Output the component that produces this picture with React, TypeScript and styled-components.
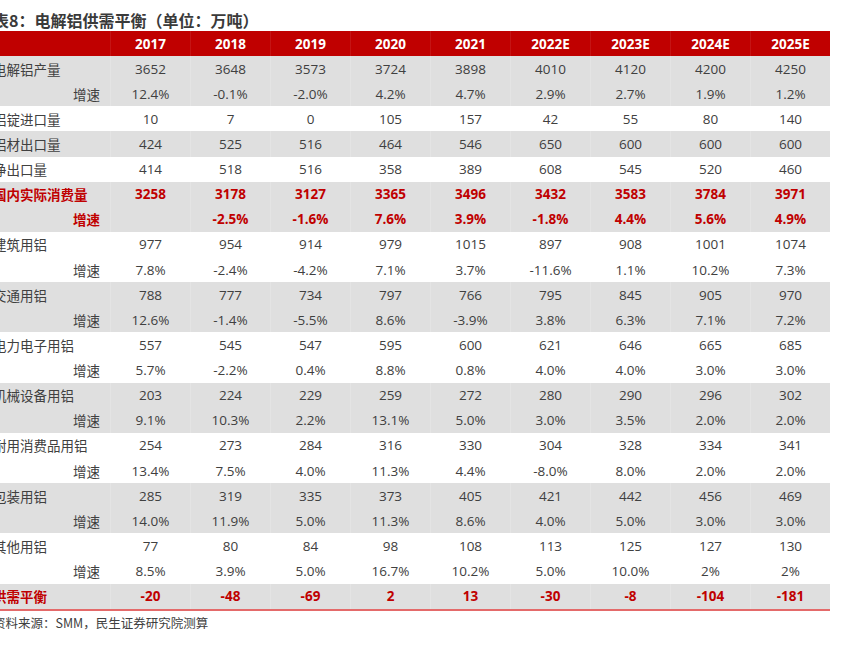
import React from 'react';
import styled, { createGlobalStyle } from 'styled-components';

const GlobalStyle = createGlobalStyle`
  html, body {
    margin: 0;
    padding: 0;
    background: #ffffff;
  }
  body {
    font-family: "Open Sans", "Noto Sans CJK SC", sans-serif;
  }
`;

const years = ['2017', '2018', '2019', '2020', '2021', '2022E', '2023E', '2024E', '2025E'];

interface RowData {
  label: string;
  values: string[];
  sub?: boolean;
  shade?: boolean;
  hot?: boolean;
}

const rows: RowData[] = [
  { label: '电解铝产量', shade: true, values: ['3652', '3648', '3573', '3724', '3898', '4010', '4120', '4200', '4250'] },
  { label: '增速', sub: true, shade: true, values: ['12.4%', '-0.1%', '-2.0%', '4.2%', '4.7%', '2.9%', '2.7%', '1.9%', '1.2%'] },
  { label: '铝锭进口量', values: ['10', '7', '0', '105', '157', '42', '55', '80', '140'] },
  { label: '铝材出口量', shade: true, values: ['424', '525', '516', '464', '546', '650', '600', '600', '600'] },
  { label: '净出口量', values: ['414', '518', '516', '358', '389', '608', '545', '520', '460'] },
  { label: '国内实际消费量', shade: true, hot: true, values: ['3258', '3178', '3127', '3365', '3496', '3432', '3583', '3784', '3971'] },
  { label: '增速', sub: true, shade: true, hot: true, values: ['', '-2.5%', '-1.6%', '7.6%', '3.9%', '-1.8%', '4.4%', '5.6%', '4.9%'] },
  { label: '建筑用铝', values: ['977', '954', '914', '979', '1015', '897', '908', '1001', '1074'] },
  { label: '增速', sub: true, values: ['7.8%', '-2.4%', '-4.2%', '7.1%', '3.7%', '-11.6%', '1.1%', '10.2%', '7.3%'] },
  { label: '交通用铝', shade: true, values: ['788', '777', '734', '797', '766', '795', '845', '905', '970'] },
  { label: '增速', sub: true, shade: true, values: ['12.6%', '-1.4%', '-5.5%', '8.6%', '-3.9%', '3.8%', '6.3%', '7.1%', '7.2%'] },
  { label: '电力电子用铝', values: ['557', '545', '547', '595', '600', '621', '646', '665', '685'] },
  { label: '增速', sub: true, values: ['5.7%', '-2.2%', '0.4%', '8.8%', '0.8%', '4.0%', '4.0%', '3.0%', '3.0%'] },
  { label: '机械设备用铝', shade: true, values: ['203', '224', '229', '259', '272', '280', '290', '296', '302'] },
  { label: '增速', sub: true, shade: true, values: ['9.1%', '10.3%', '2.2%', '13.1%', '5.0%', '3.0%', '3.5%', '2.0%', '2.0%'] },
  { label: '耐用消费品用铝', values: ['254', '273', '284', '316', '330', '304', '328', '334', '341'] },
  { label: '增速', sub: true, values: ['13.4%', '7.5%', '4.0%', '11.3%', '4.4%', '-8.0%', '8.0%', '2.0%', '2.0%'] },
  { label: '包装用铝', shade: true, values: ['285', '319', '335', '373', '405', '421', '442', '456', '469'] },
  { label: '增速', sub: true, shade: true, values: ['14.0%', '11.9%', '5.0%', '11.3%', '8.6%', '4.0%', '5.0%', '3.0%', '3.0%'] },
  { label: '其他用铝', values: ['77', '80', '84', '98', '108', '113', '125', '127', '130'] },
  { label: '增速', sub: true, values: ['8.5%', '3.9%', '5.0%', '16.7%', '10.2%', '5.0%', '10.0%', '2%', '2%'] },
  { label: '供需平衡', shade: true, hot: true, values: ['-20', '-48', '-69', '2', '13', '-30', '-8', '-104', '-181'] },
];

const App: React.FC = () => {
  return (
    <>
      <GlobalStyle />
      <Page>
        <Title>表8：电解铝供需平衡（单位：万吨）</Title>
        <Table>
          <HeadRow>
            <HeadCell />
            {years.map((y) => (
              <HeadCell key={y}>{y}</HeadCell>
            ))}
          </HeadRow>
          {rows.map((r, i) => (
            <Row key={i} $shade={!!r.shade}>
              <Label $sub={!!r.sub} $hot={!!r.hot}>{r.label}</Label>
              {r.values.map((v, j) => (
                <Cell key={j} $hot={!!r.hot}>{v}</Cell>
              ))}
            </Row>
          ))}
        </Table>
        <Source>资料来源：SMM，民生证券研究院测算</Source>
      </Page>
    </>
  );
};

export default App;

const Page = styled.div`
  margin-left: -7px;
  padding-top: 10px;
  width: 837px;
`;

const Title = styled.div`
  height: 21px;
  line-height: 21px;
  font-family: "Noto Sans CJK SC", sans-serif;
  font-size: 16px;
  font-weight: 700;
  color: #3a3a3a;
  white-space: nowrap;
`;

const Table = styled.div`
  display: flex;
  flex-direction: column;
  width: 837px;
  border-bottom: 2px solid #e46a6a;
`;

const HeadRow = styled.div`
  display: grid;
  grid-template-columns: 117px repeat(9, 80px);
  height: 25px;
  background: #c00000;
`;

const HeadCell = styled.div`
  display: flex;
  align-items: center;
  justify-content: center;
  color: #ffffff;
  font-size: 13.5px;
  font-weight: 700;
  border-left: 1px solid rgba(255, 255, 255, 0.08);
  &:first-child {
    border-left: none;
  }
`;

const Row = styled.div<{ $shade: boolean }>`
  display: grid;
  grid-template-columns: 117px repeat(9, 80px);
  height: 25.14px;
  background: ${(p) => (p.$shade ? '#dfdfdf' : '#ffffff')};
`;

const Label = styled.div<{ $sub: boolean; $hot: boolean }>`
  display: flex;
  align-items: center;
  justify-content: ${(p) => (p.$sub ? 'flex-end' : 'flex-start')};
  padding-right: ${(p) => (p.$sub ? '10px' : '0')};
  font-family: "Noto Sans CJK SC", sans-serif;
  font-size: 13.5px;
  font-weight: ${(p) => (p.$hot ? 700 : 400)};
  color: ${(p) => (p.$hot ? '#c00000' : '#404040')};
  white-space: nowrap;
`;

const Cell = styled.div<{ $hot: boolean }>`
  display: flex;
  align-items: center;
  justify-content: center;
  font-size: 13.5px;
  font-weight: ${(p) => (p.$hot ? 700 : 400)};
  color: ${(p) => (p.$hot ? '#c00000' : '#404040')};
  border-left: 1px solid rgba(255, 255, 255, 0.18);
`;

const Source = styled.div`
  margin-top: 3px;
  line-height: 18px;
  font-family: "Noto Sans CJK SC", sans-serif;
  font-size: 12.5px;
  color: #404040;
  white-space: nowrap;
`;
